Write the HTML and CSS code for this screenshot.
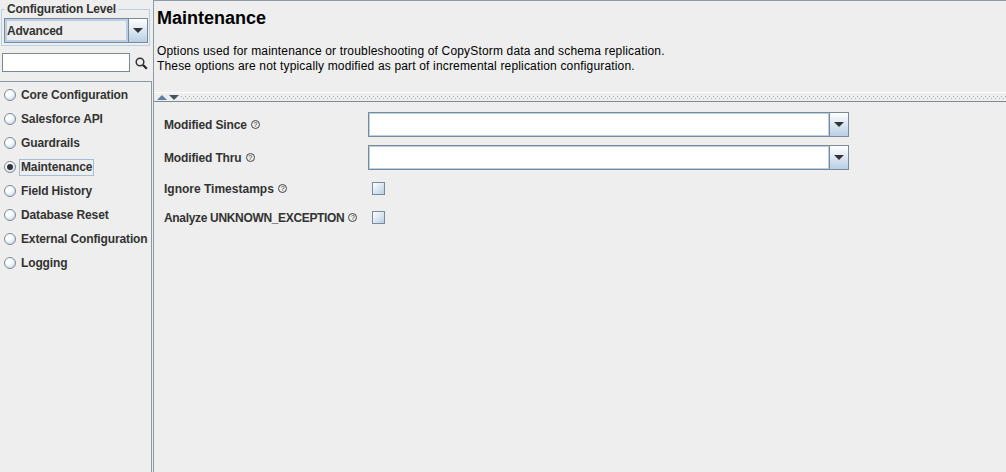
FILE: index.html
```html
<!DOCTYPE html>
<html lang="en">
<head>
    <meta charset="UTF-8">
    <meta name="viewport" content="width=device-width, initial-scale=1.0">
    <title>Maintenance</title>
    <link rel="stylesheet" href="styles.css">
</head>
<body>
    <div class="window">
        <div class="sidebar">
            <fieldset class="level">
                <legend>Configuration Level</legend>
                <div class="combo combo-level">
                    <div class="combo-field">Advanced</div>
                    <div class="combo-btn"><span class="arrow"></span></div>
                </div>
            </fieldset>

            <div class="search">
                <input type="text" class="search-input">
                <svg class="search-icon" width="13" height="13" viewBox="0 0 13 13">
                    <circle cx="5" cy="5" r="3.8" fill="none" stroke="#333" stroke-width="1.5"/>
                    <path d="M8 8 L11.8 11.8" stroke="#222" stroke-width="2.2"/>
                </svg>
            </div>

            <div class="nav">
                <div class="nav-item"><span class="radio"></span><span class="nav-label">Core Configuration</span></div>
                <div class="nav-item"><span class="radio"></span><span class="nav-label">Salesforce API</span></div>
                <div class="nav-item"><span class="radio"></span><span class="nav-label">Guardrails</span></div>
                <div class="nav-item"><span class="radio checked"></span><span class="nav-label focused">Maintenance</span></div>
                <div class="nav-item"><span class="radio"></span><span class="nav-label">Field History</span></div>
                <div class="nav-item"><span class="radio"></span><span class="nav-label">Database Reset</span></div>
                <div class="nav-item"><span class="radio"></span><span class="nav-label">External Configuration</span></div>
                <div class="nav-item"><span class="radio"></span><span class="nav-label">Logging</span></div>
            </div>
        </div>

        <div class="main">
            <div class="header">
                <h1>Maintenance</h1>
                <p>Options used for maintenance or troubleshooting of CopyStorm data and schema replication.<br>These options are not typically modified as part of incremental replication configuration.</p>
            </div>

            <div class="splitter">
                <span class="tri-up"></span>
                <span class="tri-down"></span>
                <span class="dots"></span>
            </div>

            <div class="form">
                <div class="row row-combo">
                    <div class="field-label">Modified Since <span class="help">?</span></div>
                    <div class="combo combo-wide">
                        <div class="combo-field"></div>
                        <div class="combo-btn"><span class="arrow"></span></div>
                    </div>
                </div>
                <div class="row row-combo">
                    <div class="field-label">Modified Thru <span class="help">?</span></div>
                    <div class="combo combo-wide">
                        <div class="combo-field"></div>
                        <div class="combo-btn"><span class="arrow"></span></div>
                    </div>
                </div>
                <div class="row row-check">
                    <div class="field-label loose">Ignore Timestamps <span class="help">?</span></div>
                    <span class="check"></span>
                </div>
                <div class="row row-check">
                    <div class="field-label tight">Analyze UNKNOWN_EXCEPTION <span class="help">?</span></div>
                    <span class="check"></span>
                </div>
            </div>
        </div>
    </div>
</body>
</html>
```

FILE: styles.css
```css
html, body {
    margin: 0;
    padding: 0;
}

body {
    width: 1006px;
    height: 472px;
    overflow: hidden;
    background-color: #eeeeee;
    font-family: "Liberation Sans", Arial, sans-serif;
    font-size: 12px;
    color: #333333;
}

.window {
    display: flex;
    height: 472px;
}

.sidebar {
    width: 153px;
    flex: none;
    display: flex;
    flex-direction: column;
}

.level {
    margin: 3px 3px 0 1px;
    padding: 2px;
    height: 43px;
    box-sizing: border-box;
    border: 1px solid #b8cfe5;
    min-width: 0;
}

.level legend {
    padding: 0 2px;
    margin-left: 1px;
    font-size: 12px;
    font-weight: bold;
    letter-spacing: -0.2px;
    color: #333333;
    line-height: 13px;
}

.combo {
    display: flex;
    box-sizing: border-box;
    border: 1px solid #7a8a99;
}

.combo-level {
    width: 144px;
    height: 25px;
}

.combo-wide {
    width: 481px;
    height: 25px;
}

.combo-field {
    flex: 1;
    box-sizing: border-box;
    border: 1px solid #b8cfe5;
    background-color: #ffffff;
    font-weight: bold;
    letter-spacing: -0.2px;
    line-height: 22px;
    padding-left: 1px;
}

.combo-level .combo-field {
    background-color: #eeeeee;
    border-width: 2px;
    line-height: 20px;
    padding-left: 0;
}

.combo-btn {
    width: 18px;
    flex: none;
    display: flex;
    align-items: center;
    justify-content: center;
    border-left: 1px solid #7a8a99;
    background: linear-gradient(#ffffff, #b8cfe5);
}

.arrow {
    width: 0;
    height: 0;
    border-left: 5px solid transparent;
    border-right: 5px solid transparent;
    border-top: 5px solid #333333;
}

.search {
    display: flex;
    align-items: center;
    margin: 7px 0 0 2px;
}

.search-input {
    width: 128px;
    height: 19px;
    box-sizing: border-box;
    border: 1px solid #7a8a99;
    background-color: #ffffff;
    padding: 0;
}

.search-icon {
    margin: 2px 0 0 5px;
}

.nav {
    flex: 1;
    margin: 9px 1px 0 0;
    border-top: 1px solid #8c98a4;
    border-right: 1px solid #8c98a4;
    padding-top: 1px;
}

.nav-item {
    display: flex;
    align-items: center;
    height: 24px;
    padding-left: 4px;
}

.radio {
    width: 10px;
    height: 10px;
    flex: none;
    margin-bottom: 1px;
    border: 1px solid #7a8a99;
    border-radius: 50%;
    background: radial-gradient(circle at 35% 30%, #ffffff 30%, #b8cfe5 100%);
    display: flex;
    align-items: center;
    justify-content: center;
}

.radio.checked::after {
    content: "";
    width: 6px;
    height: 6px;
    border-radius: 50%;
    background-color: #333333;
}

.nav-label {
    margin-left: 3px;
    padding: 1px;
    border: 1px solid transparent;
    font-weight: bold;
    letter-spacing: -0.13px;
    white-space: nowrap;
    line-height: 13px;
}

.nav-label.focused {
    border-color: #a3bed8;
}

.main {
    flex: 1;
    border-left: 1px solid #8c98a4;
    min-width: 0;
}

.header {
    height: 92px;
    box-sizing: border-box;
    border-top: 1px solid #8c98a4;
    padding: 7px 0 0 3px;
}

.header h1 {
    margin: 0;
    font-size: 18px;
    line-height: 21px;
    font-weight: bold;
    color: #000000;
}

.header p {
    margin: 15px 0 0 0;
    font-size: 12px;
    line-height: 15px;
    letter-spacing: 0.165px;
    color: #000000;
}

.splitter {
    display: flex;
    align-items: center;
    height: 8px;
    border-top: 1px solid #ffffff;
    border-bottom: 1px solid #7a8a99;
    padding-left: 3px;
}

.tri-up, .tri-down {
    width: 0;
    height: 0;
    border-left: 5px solid transparent;
    border-right: 5px solid transparent;
    margin-right: 2px;
}

.tri-up {
    border-bottom: 5px solid #5f7f9f;
}

.tri-down {
    border-top: 5px solid #445566;
}

.dots {
    flex: 1;
    height: 3px;
    background:
        linear-gradient(90deg, #aaaaaa 1px, transparent 1px) 0 0 / 4px 1px repeat-x,
        linear-gradient(90deg, #aaaaaa 1px, transparent 1px) 2px 2px / 4px 1px repeat-x;
}

.form {
    padding: 10px 0 0 10px;
}

.row {
    display: flex;
    align-items: center;
}

.row-combo {
    height: 25px;
    margin-bottom: 8px;
}

.row-combo + .row-check {
    margin-top: 12px;
}

.row-check {
    height: 13px;
    margin-bottom: 16px;
}

.field-label {
    width: 204px;
    flex: none;
    font-weight: bold;
    letter-spacing: -0.14px;
    white-space: nowrap;
}

.field-label.loose {
    letter-spacing: 0;
}

.field-label.tight {
    letter-spacing: -0.33px;
}

.help {
    display: inline-block;
    width: 7px;
    height: 7px;
    border: 1px solid #444444;
    border-radius: 50%;
    margin-left: 1px;
    font-size: 7px;
    line-height: 7px;
    letter-spacing: 0;
    text-align: center;
    vertical-align: 2px;
    font-weight: normal;
}

.check {
    width: 13px;
    height: 13px;
    box-sizing: border-box;
    margin-left: 4px;
    border: 1px solid #7a8a99;
    background: linear-gradient(135deg, #ffffff, #b8cfe5);
}
```
